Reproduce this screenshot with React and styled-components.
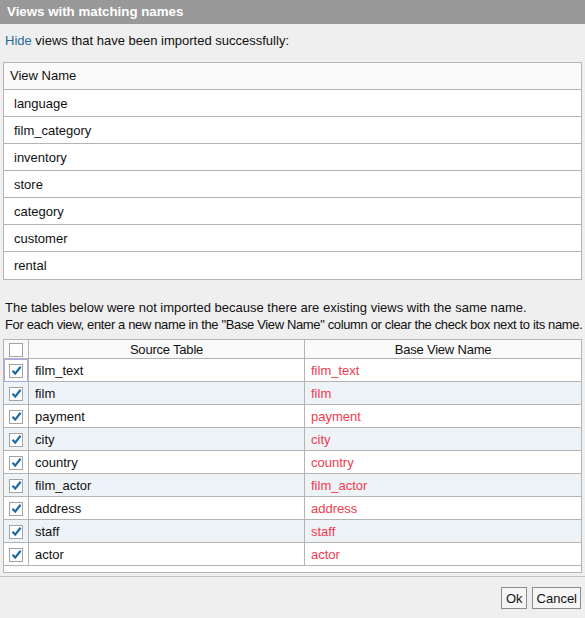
import React, { useState } from "react";
import styled, { createGlobalStyle } from "styled-components";

const GlobalStyle = createGlobalStyle`
  html, body {
    margin: 0;
    padding: 0;
    background: #efefef;
  }
  body {
    font-family: "Liberation Sans", Arial, sans-serif;
    font-size: 13px;
    color: #111;
  }
`;

const imported = ["language", "film_category", "inventory", "store", "category", "customer", "rental"];
const conflicts = ["film_text", "film", "payment", "city", "country", "film_actor", "address", "staff", "actor"];

export default function App() {
  const [checked, setChecked] = useState(conflicts.map(() => true));

  const toggle = (i) => {
    setChecked(checked.map((c, j) => (j === i ? !c : c)));
  };

  return (
    <Dialog>
      <GlobalStyle />
      <TitleBar>Views with matching names</TitleBar>

      <Body>
        <Intro>
          <HideLink>Hide</HideLink> views that have been imported successfully:
        </Intro>

        <ViewTable>
          <ViewHead>View Name</ViewHead>
          {imported.map((name) => (
            <ViewRow key={name}>{name}</ViewRow>
          ))}
        </ViewTable>

        <Note>
          <NoteLine>
            The tables below were not imported because there are existing views with the same name.
          </NoteLine>
          <NoteLine $tight>
            For each view, enter a new name in the "Base View Name" column or clear the check box next to its name.
          </NoteLine>
        </Note>

        <Grid>
          <GridRow $head>
            <CheckCell>
              <CheckBox onClick={() => setChecked(checked.map(() => false))} />
            </CheckCell>
            <HeadCell>Source Table</HeadCell>
            <HeadCell>Base View Name</HeadCell>
          </GridRow>
          {conflicts.map((name, i) => (
            <GridRow key={name} $alt={i % 2 === 1}>
              <CheckCell $focus={i === 0}>
                <CheckBox onClick={() => toggle(i)}>
                  {checked[i] && (
                    <svg width="11" height="11" viewBox="0 0 11 11">
                      <path d="M1.5 5.8 L4.2 8.6 L9.6 1.8" fill="none" stroke="#1d6aa5" strokeWidth="2.2" />
                    </svg>
                  )}
                </CheckBox>
              </CheckCell>
              <Cell>{name}</Cell>
              <Cell $red>{name}</Cell>
            </GridRow>
          ))}
          <GridFoot />
        </Grid>
      </Body>

      <Footer>
        <Button>Ok</Button>
        <Button>Cancel</Button>
      </Footer>
    </Dialog>
  );
}

const Dialog = styled.div`
  width: 585px;
  height: 618px;
  overflow: hidden;
  background: #efefef;
  display: flex;
  flex-direction: column;
`;

const TitleBar = styled.div`
  height: 24px;
  background: #999999;
  color: #ffffff;
  font-weight: bold;
  font-size: 13.3px;
  line-height: 23px;
  padding-left: 7px;
`;

const Body = styled.div`
  padding: 8px 3px 0 3px;
  display: flex;
  flex-direction: column;
`;

const Intro = styled.div`
  line-height: 17px;
  padding-left: 2px;
  margin-bottom: 13px;
`;

const HideLink = styled.span`
  color: #1f6b9b;
  cursor: pointer;
`;

const ViewTable = styled.div`
  border: 1px solid #b4b4b4;
  background: #ffffff;
`;

const ViewHead = styled.div`
  height: 26px;
  line-height: 26px;
  padding-left: 6px;
  background: #fafafa;
  border-bottom: 1px solid #b4b4b4;
`;

const ViewRow = styled.div`
  height: 26px;
  line-height: 27px;
  padding-left: 10px;
  border-bottom: 1px solid #b4b4b4;

  &:last-child {
    height: 27px;
    border-bottom: none;
  }
`;

const Note = styled.div`
  padding-left: 2px;
  margin-top: 19px;
  margin-bottom: 6px;
`;

const NoteLine = styled.div`
  line-height: 17px;
  white-space: nowrap;
  letter-spacing: ${(p) => (p.$tight ? "-0.36px" : "0")};
`;

const Grid = styled.div`
  border: 1px solid #b4b4b4;
  background: #efefef;
`;

const GridRow = styled.div`
  display: grid;
  grid-template-columns: 25px 276px 1fr;
  height: ${(p) => (p.$head ? "18px" : "22px")};
  border-bottom: 1px solid #b4b4b4;
  background: ${(p) => (p.$head ? "#fafafa" : p.$alt ? "#eef3f8" : "#ffffff")};
`;

const CheckCell = styled.div`
  display: flex;
  align-items: center;
  justify-content: center;
  border-right: 1px solid #b4b4b4;
  box-shadow: ${(p) => (p.$focus ? "inset 0 0 0 1px #a9a9e2" : "none")};
`;

const CheckBox = styled.div`
  width: 12px;
  height: 12px;
  border: 1px solid #a3a3a3;
  background: #ffffff;
  display: flex;
  align-items: center;
  justify-content: center;
  cursor: pointer;
`;

const HeadCell = styled.div`
  text-align: center;
  line-height: 19px;
  letter-spacing: -0.2px;
  border-right: 1px solid #b4b4b4;

  &:last-child {
    border-right: none;
  }
`;

const Cell = styled.div`
  padding-left: 6px;
  line-height: 23px;
  color: ${(p) => (p.$red ? "#f33a50" : "#111111")};
  border-right: ${(p) => (p.$red ? "none" : "1px solid #b4b4b4")};
`;

const GridFoot = styled.div`
  height: 6px;
  background: #ffffff;
`;

const Footer = styled.div`
  margin-top: 3px;
  border-top: 1px solid #c4c4c4;
  padding: 10px 4px 0 0;
  display: flex;
  justify-content: flex-end;
  gap: 5px;
`;

const Button = styled.button`
  font-family: "Liberation Sans", Arial, sans-serif;
  font-size: 13px;
  color: #111;
  height: 22px;
  padding: 0 3px 0 4px;
  background: #f6f6f6;
  border: 1px solid #8c8c8c;
  border-radius: 0;
  cursor: pointer;
`;
